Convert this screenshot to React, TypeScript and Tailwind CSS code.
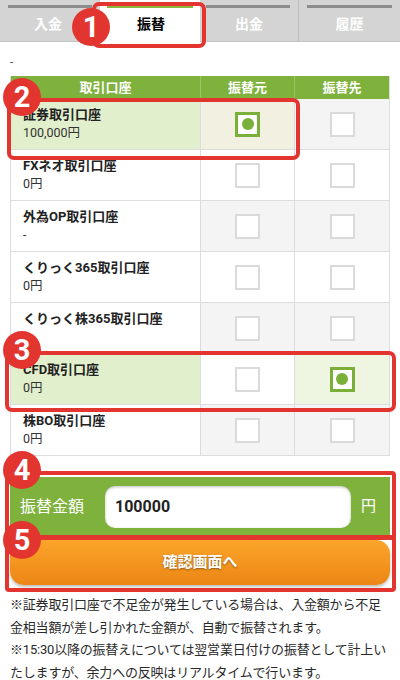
import React from "react";

const rows = [
  { name: "証券取引口座", amt: "100,000円", sel: "from" },
  { name: "FXネオ取引口座", amt: "0円", sel: "" },
  { name: "外為OP取引口座", amt: "-", sel: "" },
  { name: "くりっく365取引口座", amt: "0円", sel: "" },
  { name: "くりっく株365取引口座", amt: "", sel: "" },
  { name: "CFD取引口座", amt: "0円", sel: "to" },
  { name: "株BO取引口座", amt: "0円", sel: "" },
];

function Box({ on }: { on: boolean }) {
  if (on)
    return (
      <div className="w-[25px] h-[25px] border-[3px] border-[#7aaf3a] bg-white flex items-center justify-center">
        <div className="w-[12px] h-[12px] rounded-full bg-[#7aaf3a]" />
      </div>
    );
  return <div className="w-[25px] h-[25px] border-2 border-[#dadada] bg-white" />;
}

function Badge({ n, cls }: { n: string; cls: string }) {
  return (
    <div
      className={
        "absolute w-[38px] h-[38px] rounded-full bg-[#e23530] text-white flex items-center justify-center text-[29px] font-bold leading-none z-20 " +
        cls
      }
      style={{ fontFamily: "Roboto, 'Noto Sans', sans-serif" }}
    >
      {n}
    </div>
  );
}

export default function App() {
  return (
    <div
      className="relative w-[400px] h-[680px] bg-white overflow-hidden text-[#222]"
      style={{ fontFamily: "Roboto, 'Noto Sans CJK JP', sans-serif" }}
    >
      {/* Tabs */}
      <div className="flex h-[42px] bg-[#d4d4d4] border-b border-[#c4c4c4]">
        <div className="w-[100px] flex flex-col">
          <div className="mx-[8px] mt-[5px] h-[3px] bg-[#8d8d8d]" />
          <div className="flex-1 flex items-center justify-center text-white font-bold text-[14px] pr-[4px]">入金</div>
        </div>
        <div className="w-[100px] flex flex-col bg-white h-[43px]">
          <div className="mx-[7px] mt-[5px] h-[3px] bg-[#8cb63c]" />
          <div className="flex-1 flex items-center justify-center text-black font-bold text-[14px] pl-[2px] pb-[2px]">振替</div>
        </div>
        <div className="w-[98px] flex flex-col">
          <div className="ml-[6px] mr-[8px] mt-[5px] h-[3px] bg-[#8d8d8d]" />
          <div className="flex-1 flex items-center justify-center text-white font-bold text-[14px]">出金</div>
        </div>
        <div className="w-[102px] flex flex-col border-l border-[#bdbdbd]">
          <div className="mx-[8px] mt-[5px] h-[3px] bg-[#8d8d8d]" />
          <div className="flex-1 flex items-center justify-center text-white font-bold text-[14px]">履歴</div>
        </div>
      </div>

      <div className="px-[10px]">
        <div className="text-[12px] text-[#555] h-[34px] pt-[14px] leading-none">-</div>

        {/* Table */}
        <div className="border-l border-r border-[#dddddd]">
          <div className="flex h-[23px] bg-[#7fb23d] text-white font-bold text-[13px]">
            <div className="w-[190px] flex items-center justify-center border-r border-[#9cc56a]">取引口座</div>
            <div className="w-[94px] flex items-center justify-center border-r border-[#9cc56a]">振替元</div>
            <div className="flex-1 flex items-center justify-center">振替先</div>
          </div>
          {rows.map((r, i) => {
            const gray = i % 2 === 0;
            const c1 = r.sel ? "bg-[#e2efcc]" : "bg-white";
            const c2 = r.sel === "from" ? "bg-[#f1f0e1]" : r.sel === "to" ? "bg-white" : gray ? "bg-[#f4f4f4]" : "bg-white";
            const c3 = r.sel === "to" ? "bg-[#eef6e2]" : gray ? "bg-[#f4f4f4]" : "bg-white";
            return (
              <div key={i} className="flex h-[51px] border-b border-[#dddddd]">
                <div className={"w-[190px] flex flex-col justify-center pl-[12px] border-r border-[#dddddd] " + c1}>
                  <div className="text-[13px] font-bold leading-[18px]">{r.name}</div>
                  {r.amt !== "" && <div className="text-[12.5px] leading-[18px] text-[#333]">{r.amt}</div>}
                  {r.amt === "" && <div className="h-[18px]" />}
                </div>
                <div className={"w-[94px] flex items-center justify-center border-r border-[#dddddd] " + c2}>
                  <Box on={r.sel === "from"} />
                </div>
                <div className={"flex-1 flex items-center justify-center " + c3}>
                  <Box on={r.sel === "to"} />
                </div>
              </div>
            );
          })}
        </div>

        {/* Amount */}
        <div className="mt-[21px] h-[59px] bg-[#7fb23d] flex items-center pl-[10px] pr-[14px]">
          <div className="text-white text-[16px] w-[85px]">振替金額</div>
          <div className="flex-1 h-[42px] bg-white rounded-[10px] flex items-center pl-[10px] text-[16px] font-bold text-[#222] shadow-[inset_0_1px_3px_rgba(0,0,0,0.25)]">
            100000
          </div>
          <div className="text-white text-[15px] ml-[10px]">円</div>
        </div>

        {/* Button */}
        <div className="mt-[4px] h-[45px] rounded-[14px] bg-gradient-to-b from-[#fba52a] to-[#ec8614] flex items-center justify-center text-white font-bold text-[15px] shadow-[0_2px_3px_rgba(0,0,0,0.25)] [text-shadow:0_1px_2px_rgba(0,0,0,0.4)]">
          確認画面へ
        </div>

        {/* Notes */}
        <div className="mt-[9px] text-[13px] leading-[22.5px] text-[#2a2a2a] tracking-[-0.2px]">
          <p>※証券取引口座で不足金が発生している場合は、入金額から不足金相当額が差し引かれた金額が、自動で振替されます。</p>
          <p>※15:30以降の振替えについては翌営業日付けの振替として計上いたしますが、余力への反映はリアルタイムで行います。</p>
        </div>
      </div>

      {/* Annotations */}
      <div className="absolute left-[92px] top-[2px] w-[114px] h-[46px] border-[4px] border-[#e23530] rounded-[7px] z-10" />
      <Badge n="1" cls="left-[72px] top-[8px]" />
      <div className="absolute left-[7px] top-[98px] w-[293px] h-[62px] border-[4px] border-[#e23530] rounded-[7px] z-10" />
      <Badge n="2" cls="left-[3px] top-[78px]" />
      <div className="absolute left-[5px] top-[351px] w-[391px] h-[61px] border-[4px] border-[#e23530] rounded-[7px] z-10" />
      <Badge n="3" cls="left-[3px] top-[331px]" />
      <div className="absolute left-[5px] top-[471px] w-[391px] h-[69px] border-[4px] border-[#e23530] rounded-[4px] z-10" />
      <Badge n="4" cls="left-[3px] top-[451px]" />
      <div className="absolute left-[5px] top-[535px] w-[391px] h-[57px] border-[4px] border-[#e23530] rounded-[4px] z-10" />
      <Badge n="5" cls="left-[3px] top-[521px]" />
    </div>
  );
}
